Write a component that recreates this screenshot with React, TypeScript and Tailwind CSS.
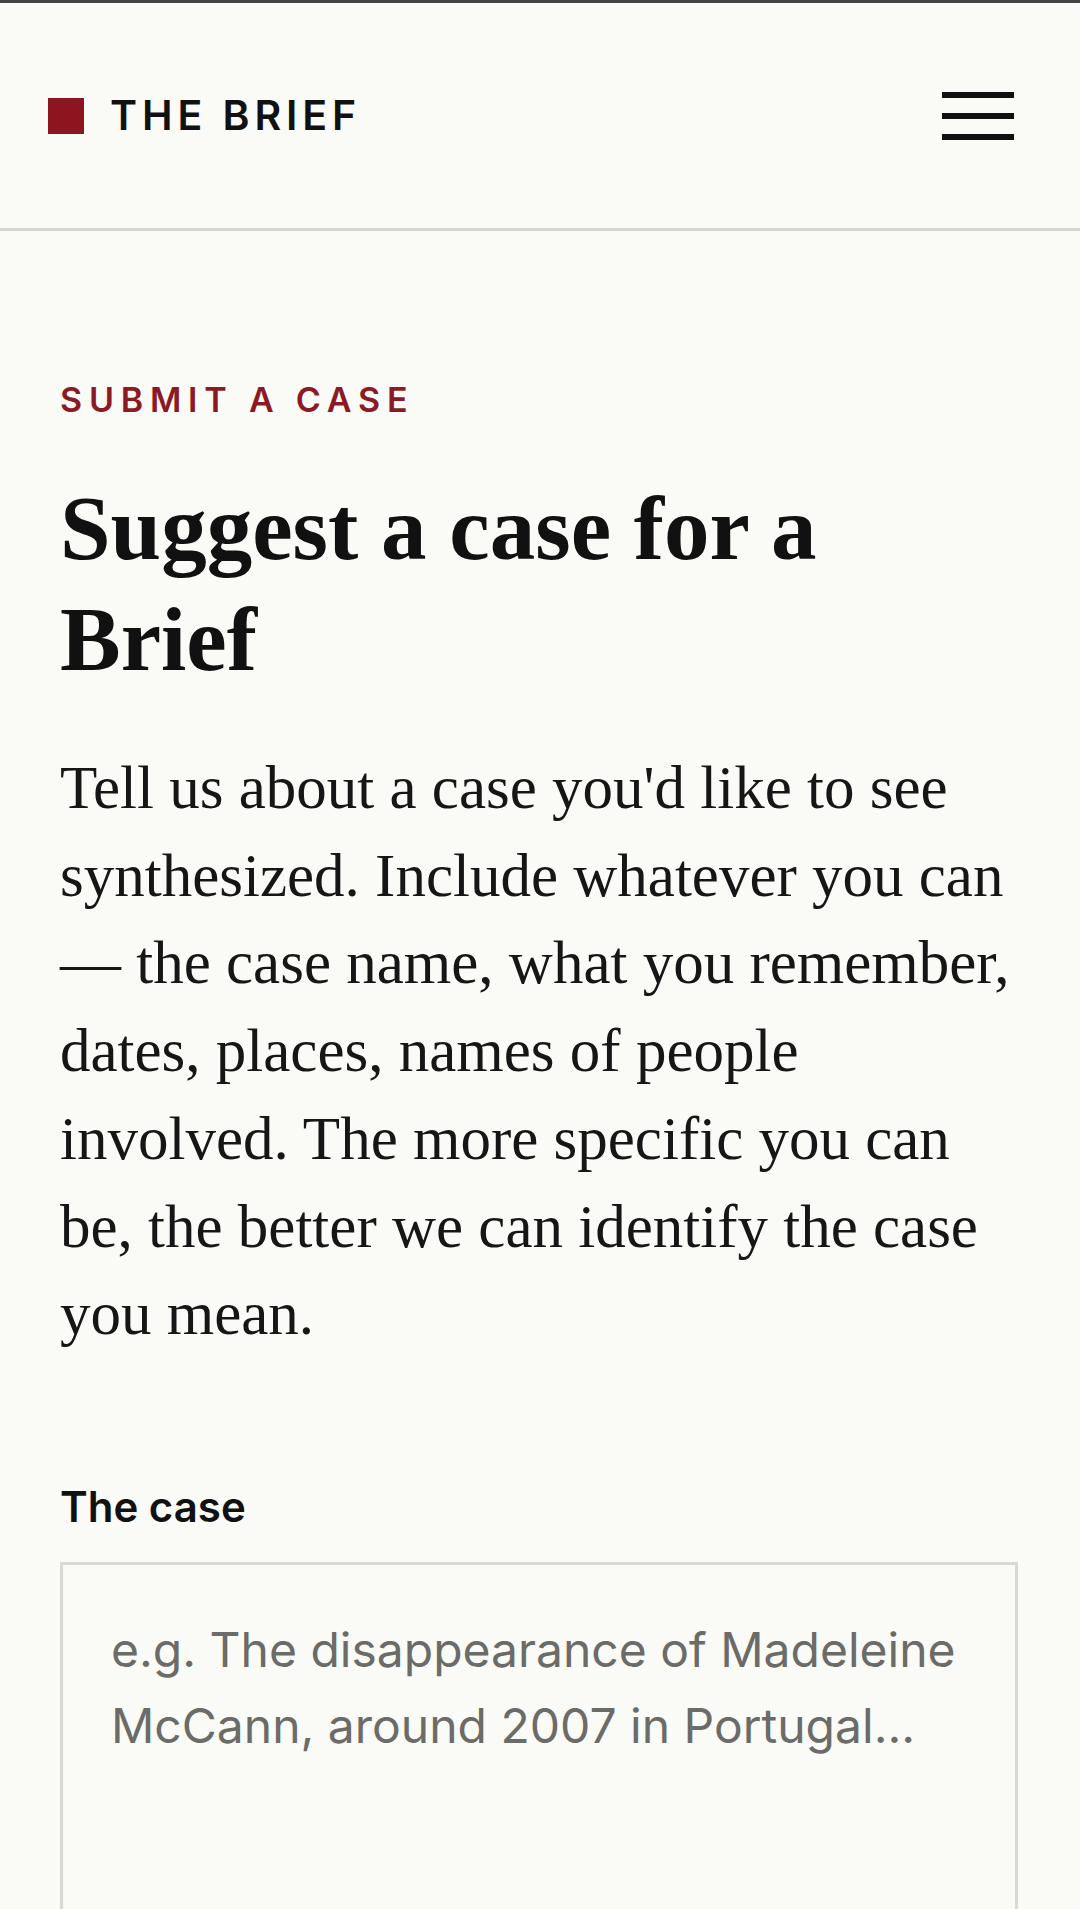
import React from 'react';

const sans = { fontFamily: 'Inter, "Liberation Sans", sans-serif' };
const serif = { fontFamily: '"Liberation Serif", "DejaVu Serif", serif' };

function Header() {
  return (
    <header className="h-[228px] border-b-[3px] border-[#d6d6d1] flex items-center justify-between pl-[48px] pr-[66px]">
      <a href="#" className="flex items-center gap-[26px]">
        <span className="block w-[36px] h-[36px] bg-[#8c1620]" />
        <span
          className="text-[41px] leading-none font-semibold tracking-[0.12em] text-[#111]"
          style={sans}
        >
          THE BRIEF
        </span>
      </a>
      <button aria-label="Menu" className="w-[72px] flex flex-col gap-[15px]">
        <span className="block h-[6px] bg-[#111]" />
        <span className="block h-[6px] bg-[#111]" />
        <span className="block h-[6px] bg-[#111]" />
      </button>
    </header>
  );
}

export default function App() {
  return (
    <div className="min-h-screen bg-[#fafaf7] border-t-[3px] border-[#444] overflow-hidden">
      <Header />
      <main className="pl-[60px] pr-[62px] pt-[149px]">
        <p
          className="text-[34px] leading-[40px] font-semibold tracking-[0.2em] text-[#8c1a24]"
          style={sans}
        >
          SUBMIT A CASE
        </p>
        <h1
          className="mt-[53px] text-[91px] leading-[111px] font-bold text-[#111]"
          style={serif}
        >
          Suggest a case for a Brief
        </h1>
        <p
          className="mt-[49px] text-[61px] leading-[87.7px] text-[#161616]"
          style={serif}
        >
          Tell us about a case you'd like to see synthesized. Include whatever you can
          — the case name, what you remember, dates, places, names of people involved.
          The more specific you can be, the better we can identify the case you mean.
        </p>

        <form className="mt-[125px]">
          <label
            htmlFor="case"
            className="block text-[42px] leading-[48px] font-semibold text-[#111]"
            style={sans}
          >
            The case
          </label>
          <textarea
            id="case"
            rows={6}
            placeholder="e.g. The disappearance of Madeleine McCann, around 2007 in Portugal..."
            className="mt-[31px] block w-full h-[520px] resize-none bg-transparent border-[3px] border-[#d9d9d4] px-[48px] pt-[47px] text-[48px] leading-[76px] text-[#111] placeholder:text-[#6b6b68] outline-none"
            style={sans}
          />
        </form>
      </main>
    </div>
  );
}
